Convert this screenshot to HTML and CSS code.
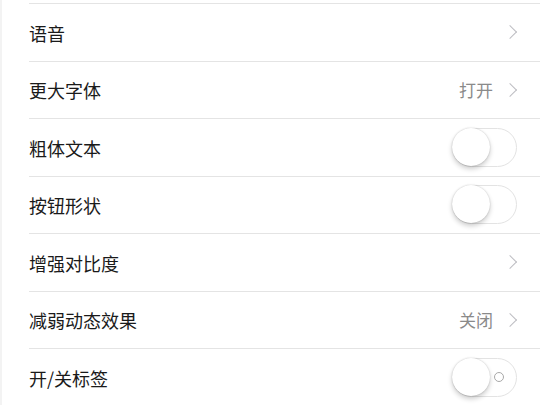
FILE: index.html
```html
<!DOCTYPE html>
<html lang="zh">
<head>
<meta charset="utf-8">
<link rel="stylesheet" href="styles.css">
</head>
<body>
<div class="page">
  <ul class="list">
    <li class="row"><span class="label">语音</span><span class="chev"></span></li>
    <li class="row"><span class="label">更大字体</span><span class="value">打开</span><span class="chev"></span></li>
    <li class="row"><span class="label">粗体文本</span><span class="switch"><span class="knob"></span></span></li>
    <li class="row"><span class="label">按钮形状</span><span class="switch"><span class="knob"></span></span></li>
    <li class="row"><span class="label">增强对比度</span><span class="chev"></span></li>
    <li class="row"><span class="label">减弱动态效果</span><span class="value">关闭</span><span class="chev"></span></li>
    <li class="row"><span class="label">开/关标签</span><span class="switch"><span class="knob"></span><span class="off-mark"></span></span></li>
  </ul>
</div>
</body>
</html>
```
FILE: styles.css
```css
html, body {
  margin: 0;
  padding: 0;
  background: #fff;
}
body {
  font-family: "Noto Sans CJK SC", "Noto Sans", sans-serif;
  color: #111;
}
.page {
  width: 540px;
  height: 405px;
  overflow: hidden;
  box-sizing: border-box;
  border-left: 2px solid #f3f3f3;
  padding-top: 3px;
}
.list {
  list-style: none;
  margin: 0;
  padding: 0 0 0 27px;
}
.row {
  box-sizing: border-box;
  height: 57.5px;
  display: flex;
  align-items: center;
  border-top: 1.5px solid #e4e4e4;
  padding-right: 23px;
}
.label {
  flex: 1;
  font-size: 18px;
  line-height: 1;
  color: #1a1a1a;
  padding-top: 1px;
}
.value {
  font-size: 17px;
  color: #8a8a8a;
  margin-right: 12px;
  line-height: 1;
}
.chev {
  width: 9px;
  height: 9px;
  border-top: 1.4px solid #bdbdc2;
  border-right: 1.4px solid #bdbdc2;
  transform: rotate(45deg);
  margin-right: 2px;
}
.switch {
  position: relative;
  box-sizing: border-box;
  width: 65px;
  height: 39px;
  border: 1.5px solid #e3e3e3;
  border-radius: 20px;
  background: #fff;
}
.knob {
  position: absolute;
  left: -1px;
  top: -1px;
  width: 38px;
  height: 38px;
  border-radius: 50%;
  background: #fff;
  box-shadow: 0 3px 5px rgba(0,0,0,0.2), 0 0 1.5px rgba(0,0,0,0.22);
}
.off-mark {
  position: absolute;
  right: 12px;
  top: 13px;
  width: 8px;
  height: 8px;
  border: 1.5px solid #a8a8a8;
  border-radius: 50%;
}
```
